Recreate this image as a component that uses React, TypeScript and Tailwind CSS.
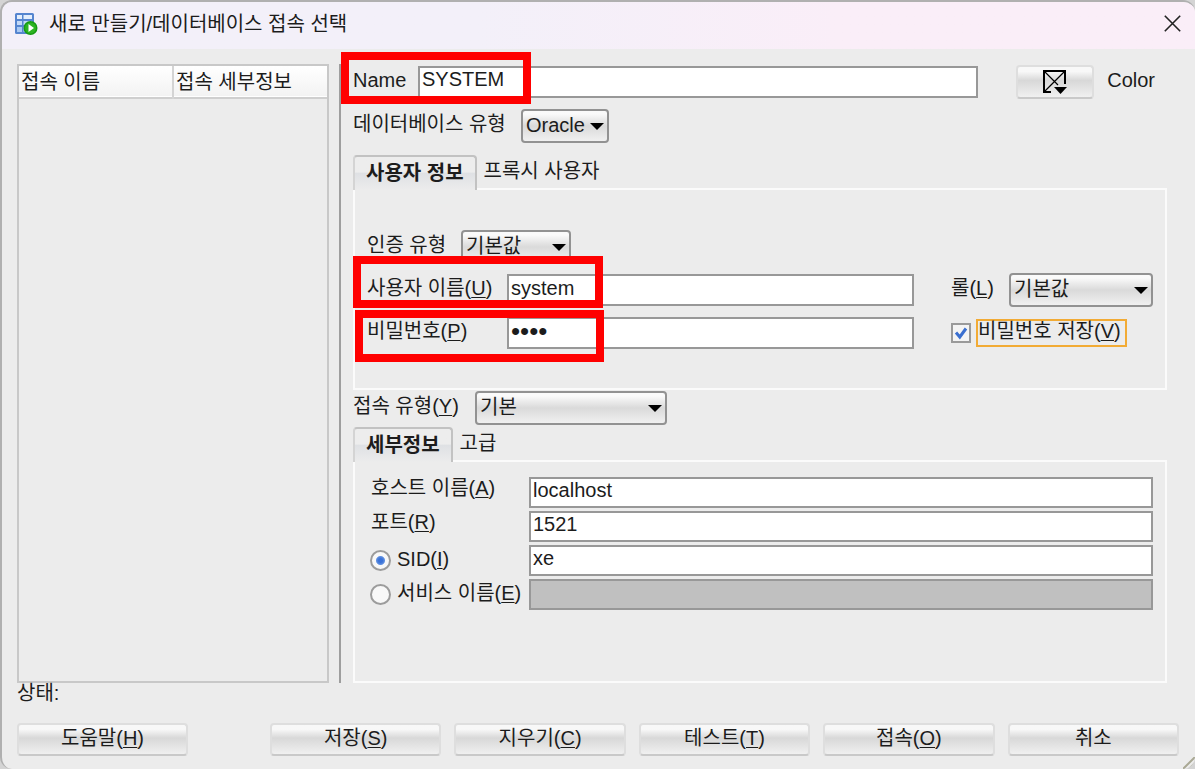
import { useId, useState } from "react";
import type { InputHTMLAttributes, ReactNode } from "react";
import clsx from "clsx";

type Mnemonic = { text: string; hotkey?: string };

// Label text followed by its underlined access key, e.g. 저장(S)
function Caption({ text, hotkey }: Mnemonic) {
  return (
    <>
      {text}
      {hotkey && (
        <>
          (<span className="underline decoration-1 underline-offset-2">{hotkey}</span>)
        </>
      )}
    </>
  );
}

function TextField({ className, ...props }: InputHTMLAttributes<HTMLInputElement>) {
  return (
    <input
      className={clsx(
        "min-w-0 flex-1 border-2 border-[#989898] bg-white px-0.5 outline-none disabled:bg-[#c0c0c0]",
        className
      )}
      {...props}
    />
  );
}

function Dropdown({ id, options, className }: { id: string; options: string[]; className: string }) {
  return (
    <div className={clsx("relative h-[34px]", className)}>
      <select
        id={id}
        className="h-full w-full appearance-none rounded border-2 border-[#929292] bg-linear-to-b from-[#fafafa] from-10% via-[#dadada] via-50% to-[#f0f0f0] pl-[3px] pb-0.5 outline-none"
      >
        {options.map((option) => (
          <option key={option}>{option}</option>
        ))}
      </select>
      <svg
        className="pointer-events-none absolute right-[5px] top-[14px] h-[7px] w-[14px]"
        viewBox="0 0 14 7"
      >
        <path d="M0 0h14L7 7z" fill="#000" />
      </svg>
    </div>
  );
}

function TabBar({ tabs }: { tabs: string[] }) {
  const [active, setActive] = useState(0);

  return (
    <div role="tablist" className="flex h-[33px] gap-[7px]">
      {tabs.map((tab, index) => (
        <button
          key={tab}
          type="button"
          role="tab"
          aria-selected={active === index}
          onClick={() => setActive(index)}
          className={clsx(
            active === index
              ? "z-10 -mb-0.5 rounded-t border-2 border-b-0 border-[#c2c2c2] border-l-[#d4d4d4] bg-linear-to-b from-[#ededed] from-45% via-[#dfe1e4] via-50% to-[#ececec] px-[11px] pb-0.5 font-bold"
              : "pb-0.5"
          )}
        >
          {tab}
        </button>
      ))}
    </div>
  );
}

function PushButton({ text, hotkey }: Mnemonic) {
  return (
    <button
      type="button"
      className="h-[33px] rounded border-2 border-[#dedede] border-b-[#c9c9c9] bg-linear-to-b from-[#f8f8f8] from-15% via-[#d8d8d8] via-45% to-[#f0f0f0] pb-1 leading-6"
    >
      <Caption text={text} hotkey={hotkey} />
    </button>
  );
}

// Red frame that draws attention to a field
function Highlight({ className }: { className: string }) {
  return (
    <div
      aria-hidden="true"
      className={clsx("pointer-events-none absolute z-20 h-[52px] border-8 border-[#ff0000]", className)}
    />
  );
}

function DatabaseIcon() {
  return (
    <svg className="h-6 w-6" viewBox="0 0 24 24" aria-hidden="true">
      <rect x="1" y="1" width="19" height="21" rx="1.500" fill="#5585cf" />
      <path d="M3 3h5v4H3zM9.500 3H18v4H9.500z" fill="#e3eefc" />
      <path d="M3 9h5v4H3zM9.500 9H18v4H9.500z" fill="#c3d9f7" />
      <path d="M3 15h5v5H3zM9.500 15H18v5H9.500z" fill="#a9c9f3" />
      <circle cx="16.500" cy="16" r="7" fill="#159a12" />
      <circle cx="16.500" cy="16" r="5.500" fill="#2cb422" />
      <path d="M14.500 12v8l5.500-4z" fill="#fff" />
    </svg>
  );
}

function TitleBar() {
  return (
    <header className="flex h-[47px] items-center bg-linear-to-r from-[#f3f0f9] from-40% to-[#faeef8] to-70% pl-3 pr-[14px] pb-1">
      <DatabaseIcon />
      <h1 className="ml-[11px]">새로 만들기/데이터베이스 접속 선택</h1>
      <button type="button" aria-label="닫기" className="ml-auto">
        <svg className="h-[17px] w-[17px]" viewBox="0 0 17 17" stroke="#222" strokeWidth="1.600">
          <path d="M.8.800l15.400 15.400M16.200.8L.8 16.200" />
        </svg>
      </button>
    </header>
  );
}

function ConnectionList() {
  return (
    <div className="w-[312px] border-2 border-[#c8c8c8]">
      <table className="w-full table-fixed">
        <thead>
          <tr className="h-8 border-b-2 border-[#cfcfcf] bg-linear-to-b from-white to-[#f3f3f3] text-left">
            <th className="border-r-2 border-[#d4d4d4] pl-0.5 font-normal leading-6">접속 이름</th>
            <th className="pl-0.5 font-normal leading-6">접속 세부정보</th>
          </tr>
        </thead>
        <tbody />
      </table>
    </div>
  );
}

function Row({ children, className }: { children: ReactNode; className?: string }) {
  return <div className={clsx("flex h-[34px] items-center", className)}>{children}</div>;
}

function UserPanel() {
  const id = useId();

  return (
    <div className="relative flex flex-col gap-[9px] border-2 border-[#fbfbfb] pl-3 pr-3 pt-10 pb-[38px]">
      <Row>
        <label htmlFor={`${id}-auth`} className="w-[94px] pb-1">
          인증 유형
        </label>
        <Dropdown id={`${id}-auth`} options={["기본값"]} className="w-[110px]" />
      </Row>
      <Row>
        <label htmlFor={`${id}-user`} className="w-[140px] pb-1">
          <Caption text="사용자 이름" hotkey="U" />
        </label>
        <TextField id={`${id}-user`} className="h-8 pb-1" defaultValue="system" />
        <div className="ml-[37px] flex w-[202px] items-center justify-between">
          <label htmlFor={`${id}-role`} className="pb-1">
            <Caption text="롤" hotkey="L" />
          </label>
          <Dropdown id={`${id}-role`} options={["기본값"]} className="w-[144px]" />
        </div>
      </Row>
      <Row>
        <label htmlFor={`${id}-password`} className="w-[140px] pb-1">
          <Caption text="비밀번호" hotkey="P" />
        </label>
        <TextField
          id={`${id}-password`}
          type="password"
          className="h-8 pb-1 text-[26px]"
          defaultValue="xxxx"
        />
        <div className="ml-[37px] flex w-[202px] items-center gap-[5px]">
          <span className="relative h-5 w-5">
            <input
              id={`${id}-save`}
              type="checkbox"
              defaultChecked
              className="peer block h-5 w-5 appearance-none border-2 border-[#9a9a9a] bg-[#f4f4f4]"
            />
            <svg
              className="pointer-events-none invisible absolute inset-0 h-5 w-5 peer-checked:visible"
              viewBox="0 0 20 20"
              fill="none"
              stroke="#3a6fd0"
              strokeWidth="3"
            >
              <path d="M5 9.500l3.800 4.500L15 5.500" />
            </svg>
          </span>
          <label htmlFor={`${id}-save`} className="border-2 border-[#f2ab35] pr-1 pb-1 leading-5">
            <Caption text="비밀번호 저장" hotkey="V" />
          </label>
        </div>
      </Row>
      <Highlight className="-left-0.5 top-[66px] w-[250px]" />
      <Highlight className="left-0 top-[120px] w-[249px]" />
    </div>
  );
}

const radioStyle =
  "-ml-px mr-1.5 h-[21px] w-[21px] shrink-0 appearance-none rounded-full border-2 border-[#9c9c9c] bg-[#f8f8f8] checked:bg-[radial-gradient(circle,#3a72d8_0_2px,#5f8fe0_4px,#f8f8f8_5px)]";

function DetailPanel() {
  const id = useId();
  const [target, setTarget] = useState("sid");

  return (
    <div className="flex flex-1 flex-col gap-[3px] border-2 border-[#fbfbfb] pl-4 pr-3 pt-[15px]">
      <div className="flex h-[31px] items-center">
        <label htmlFor={`${id}-host`} className="w-[158px] pb-2.5">
          <Caption text="호스트 이름" hotkey="A" />
        </label>
        <TextField id={`${id}-host`} className="h-full pb-1" defaultValue="localhost" />
      </div>
      <div className="flex h-[31px] items-center">
        <label htmlFor={`${id}-port`} className="w-[158px] pb-2.5">
          <Caption text="포트" hotkey="R" />
        </label>
        <TextField id={`${id}-port`} className="h-full pb-1" defaultValue="1521" />
      </div>
      <div className="flex h-[31px] items-center">
        <div className="flex w-[158px] items-center">
          <input
            id={`${id}-sid`}
            type="radio"
            name="target"
            checked={target === "sid"}
            onChange={() => setTarget("sid")}
            className={radioStyle}
          />
          <label htmlFor={`${id}-sid`} className="pb-1">
            <Caption text="SID" hotkey="I" />
          </label>
        </div>
        <TextField aria-label="SID" className="h-full pb-1" defaultValue="xe" disabled={target !== "sid"} />
      </div>
      <div className="flex h-[31px] items-center">
        <div className="flex w-[158px] items-center">
          <input
            id={`${id}-service`}
            type="radio"
            name="target"
            checked={target === "service"}
            onChange={() => setTarget("service")}
            className={radioStyle}
          />
          <label htmlFor={`${id}-service`} className="whitespace-nowrap pb-1">
            <Caption text="서비스 이름" hotkey="E" />
          </label>
        </div>
        <TextField aria-label="서비스 이름" className="h-full pb-1" disabled={target !== "service"} />
      </div>
    </div>
  );
}

function ConnectionForm() {
  const id = useId();

  return (
    <form className="ml-[10px] flex flex-1 flex-col border-l-2 border-[#9e9e9e] pl-3 pr-7 pt-px">
      <Row className="relative">
        <label htmlFor={`${id}-name`} className="w-[65px] pb-1">
          Name
        </label>
        <TextField id={`${id}-name`} className="h-8 pb-1.5" defaultValue="SYSTEM" />
        <button
          type="button"
          aria-label="Color"
          className="ml-[38px] flex h-[34px] w-[78px] items-center justify-center rounded border-2 border-[#dedede] border-b-[#c9c9c9] bg-linear-to-b from-[#f8f8f8] from-15% via-[#d8d8d8] via-45% to-[#f0f0f0]"
        >
          <svg className="h-6 w-6" viewBox="0 0 24 24" fill="none" stroke="#000">
            <path d="M8 22H1V1h21v13" strokeWidth="2" />
            <path d="M1 1l14 14M22 1L1 22" strokeWidth="1.200" />
            <path d="M11 17h13l-6.500 7z" fill="#000" stroke="none" />
          </svg>
        </button>
        <span className="ml-[13px] mr-3 pb-1">Color</span>
        <Highlight className="-left-3 -top-[13px] w-[190px]" />
      </Row>
      <Row className="mt-[10px]">
        <label htmlFor={`${id}-db`} className="w-[168px] pb-1">
          데이터베이스 유형
        </label>
        <Dropdown id={`${id}-db`} options={["Oracle"]} className="w-[88px]" />
      </Row>
      <div className="mt-3">
        <TabBar tabs={["사용자 정보", "프록시 사용자"]} />
        <UserPanel />
      </div>
      <Row className="mt-px">
        <label htmlFor={`${id}-type`} className="w-[122px] pb-1">
          <Caption text="접속 유형" hotkey="Y" />
        </label>
        <Dropdown id={`${id}-type`} options={["기본"]} className="w-[192px]" />
      </Row>
      <div className="mt-0.5 flex flex-1 flex-col">
        <TabBar tabs={["세부정보", "고급"]} />
        <DetailPanel />
      </div>
    </form>
  );
}

export default function App() {
  return (
    <div className="min-h-screen bg-[#d4d4d4] font-['Liberation_Sans','Noto_Sans_CJK_KR',sans-serif] text-[20px] leading-6 text-[#1c1c1c]">
      <div className="relative flex min-h-screen flex-col overflow-hidden rounded-xl border-l-2 border-t-2 border-[#b0b0b0] bg-[#ececec]">
        <TitleBar />
        <main className="flex flex-1 flex-col pl-[15px] pt-[15px]">
          <div className="flex flex-1">
            <ConnectionList />
            <ConnectionForm />
          </div>
          <p className="leading-5">상태:</p>
          <footer className="mb-[13px] mr-4 mt-5 grid grid-cols-[171px_5fr] gap-[82px]">
            <PushButton text="도움말" hotkey="H" />
            <div className="grid grid-cols-5 gap-[13px]">
              <PushButton text="저장" hotkey="S" />
              <PushButton text="지우기" hotkey="C" />
              <PushButton text="테스트" hotkey="T" />
              <PushButton text="접속" hotkey="O" />
              <PushButton text="취소" />
            </div>
          </footer>
        </main>
        <svg className="absolute bottom-0 right-0 h-3 w-3" viewBox="0 0 12 12" stroke="#a9a894" aria-hidden="true">
          <path d="M0 12L12 0M6 12l6-6" strokeWidth="2" />
        </svg>
      </div>
    </div>
  );
}
